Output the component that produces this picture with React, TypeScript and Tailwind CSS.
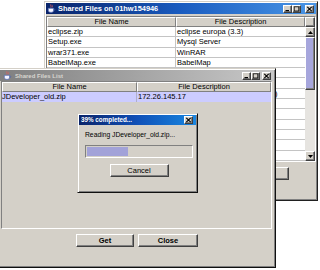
import React from "react";

const raised =
  "border border-t-white border-l-white border-r-[#404040] border-b-[#404040] shadow-[inset_-1px_-1px_0_#808080]";

function JavaIcon() {
  return (
    <svg width="9" height="9" viewBox="0 0 9 9" className="shrink-0">
      <path d="M3.8 0.4 C2.9 1.4 4.7 2 3.8 3.6" stroke="#e06060" strokeWidth="0.8" fill="none" />
      <path d="M5.4 0.9 C4.7 1.7 5.9 2.3 5.2 3.4" stroke="#e06060" strokeWidth="0.7" fill="none" />
      <path d="M1.3 4.3 H6.6 V6.4 C6.6 7.7 5.6 8.4 4 8.4 C2.4 8.4 1.3 7.7 1.3 6.4 Z" fill="#f4f4ff" stroke="#4a64b0" strokeWidth="0.7" />
      <path d="M6.6 4.8 C8.3 4.8 8.3 6.6 6.5 6.8" stroke="#4a64b0" strokeWidth="0.6" fill="none" />
    </svg>
  );
}

function TBtn({ kind }: { kind: "min" | "max" | "close" }) {
  return (
    <div className={`w-[9px] h-[8px] bg-[#d4d0c8] ${raised} flex items-center justify-center`}>
      <svg width="7" height="6" viewBox="0 0 7 6">
        {kind === "min" && <rect x="1.5" y="4" width="3.5" height="1.2" fill="#000" />}
        {kind === "max" && (
          <rect x="1.2" y="0.8" width="4.6" height="4.2" fill="none" stroke="#000" strokeWidth="0.8" />
        )}
        {kind === "close" && (
          <path d="M1.3 0.8 L5.7 5.2 M5.7 0.8 L1.3 5.2" stroke="#000" strokeWidth="1.1" />
        )}
      </svg>
    </div>
  );
}

function TitleButtons({ gapClose }: { gapClose: string }) {
  return (
    <div className="ml-auto flex items-center">
      <TBtn kind="min" />
      <TBtn kind="max" />
      <div className={gapClose} />
      <TBtn kind="close" />
    </div>
  );
}

function HeaderCell({ w, children }: { w: string; children: React.ReactNode }) {
  return (
    <div
      className={`${w} h-full bg-[#d4d0c8] border-t border-l border-t-white border-l-white border-r border-b border-r-[#808080] border-b-[#808080] flex items-center justify-center text-[7.5px] leading-none text-black whitespace-nowrap overflow-hidden`}
    >
      {children}
    </div>
  );
}

function Arrow({ up }: { up: boolean }) {
  return (
    <div className={`h-[10px] bg-[#d4d0c8] ${raised} flex items-center justify-center`}>
      <svg width="5" height="3" viewBox="0 0 5 3">
        {up ? <path d="M0 3 L2.5 0 L5 3 Z" fill="#000" /> : <path d="M0 0 L2.5 3 L5 0 Z" fill="#000" />}
      </svg>
    </div>
  );
}

const backRows: [string, string][] = [
  ["eclipse.zip", "eclipse europa (3.3)"],
  ["Setup.exe", "Mysql Server"],
  ["wrar371.exe", "WinRAR"],
  ["BabelMap.exe", "BabelMap"],
  ["", ""],
  ["", ""],
  ["", "Oracle JDeveloper (10.1.3.41)"],
  ["", ""],
  ["", ""],
  ["", ""],
  ["", ""],
  ["", ""],
  ["", ""],
];

function ClassicButton({ w, bold, children }: { w: string; bold?: boolean; children?: React.ReactNode }) {
  return (
    <div
      className={`${w} h-[13px] bg-[#d4d0c8] ${raised} flex items-center justify-center text-[7.5px] leading-none text-black ${
        bold ? "font-bold" : ""
      }`}
    >
      {children}
    </div>
  );
}

export default function App() {
  return (
    <div className="relative w-[320px] h-[270px] bg-white overflow-hidden font-['Liberation_Sans',Arial,sans-serif]">
      {/* Back window */}
      <div className="absolute left-[44px] top-[1px] w-[274px] h-[200px] bg-[#d4d0c8] border border-t-[#d4d0c8] border-l-[#d4d0c8] border-r-[#202020] border-b-[#202020] shadow-[inset_1px_1px_0_#ffffff,inset_-1px_-1px_0_#808080] p-[1px] flex flex-col">
        <div className="h-[11px] shrink-0 flex items-center bg-linear-to-r from-[#0a246a] via-[#1a5cc0] to-[#4a96e6] pl-[1px] pr-[2px] gap-[2px]">
          <JavaIcon />
          <span className="text-white font-bold text-[7.4px] leading-none whitespace-nowrap">
            Shared Files on 01hw154946
          </span>
          <TitleButtons gapClose="w-[4px]" />
        </div>
        <div className="mt-[2px] h-[146px] shrink-0 border border-t-[#808080] border-l-[#808080] border-r-white border-b-white flex">
          <div className="w-[258px] flex flex-col bg-white overflow-hidden">
            <div className="h-[10px] shrink-0 flex">
              <HeaderCell w="w-[129px]">File Name</HeaderCell>
              <HeaderCell w="w-[129px]">File Description</HeaderCell>
            </div>
            {backRows.map(([a, b], i) => (
              <div key={i} className="h-[10.3px] shrink-0 flex border-b border-[#c4c4c4] text-[7.5px] leading-[9px] text-black">
                <div className="w-[129px] border-r border-[#c4c4c4] pl-[1px] whitespace-nowrap overflow-hidden">{a}</div>
                <div className="w-[129px] pl-[1px] whitespace-nowrap overflow-hidden">{b}</div>
              </div>
            ))}
          </div>
          <div className="w-[10px] flex flex-col">
            <div className={`h-[10px] bg-[#d4d0c8] ${raised}`} />
            <Arrow up />
            <div className={`h-[53px] bg-[#a6a6dc] ${raised}`} />
            <div className="flex-1 bg-[#e6e4e0]" />
            <Arrow up={false} />
          </div>
        </div>
        <div className="flex-1 flex justify-end items-start pt-[5px] pr-[27px] gap-[4px]">
          <ClassicButton w="w-[58px]" />
        </div>
      </div>

      {/* Front window */}
      <div className="absolute left-[-2px] top-[68px] w-[278px] h-[200px] bg-[#d4d0c8] border border-t-[#d4d0c8] border-l-[#d4d0c8] border-r-[#101010] border-b-[#101010] shadow-[inset_1px_1px_0_#ffffff,inset_-1px_-1px_0_#808080] p-[1px] flex flex-col">
        <div className="h-[11px] shrink-0 flex items-center bg-linear-to-r from-[#808080] via-[#a4a4a4] to-[#c8c8c8] pl-[3px] pr-[3px] gap-[3px]">
          <JavaIcon />
          <span className="text-[#d8d6d0] font-bold text-[6px] leading-none whitespace-nowrap">Shared Files List</span>
          <TitleButtons gapClose="w-[2px]" />
        </div>
        <div className="ml-[1px] mr-[2px] h-[148px] shrink-0 border border-t-[#808080] border-l-[#808080] border-r-white border-b-white flex flex-col bg-[#d4d0c8]">
          <div className="h-[10px] shrink-0 flex">
            <HeaderCell w="w-[135px]">File Name</HeaderCell>
            <HeaderCell w="flex-1">File Description</HeaderCell>
          </div>
          <div className="h-[10px] shrink-0 flex bg-[#ccccff] text-[7.5px] leading-[10px] text-black">
            <div className="w-[135px] border-r border-[#b0b0c8] whitespace-nowrap overflow-hidden">JDeveloper_old.zip</div>
            <div className="flex-1 pl-[1px] whitespace-nowrap overflow-hidden">172.26.145.17</div>
          </div>
        </div>
        <div className="flex-1 flex justify-center items-start pt-[5px] gap-[4px]">
          <ClassicButton w="w-[58px]" bold>
            Get
          </ClassicButton>
          <ClassicButton w="w-[60px]" bold>
            Close
          </ClassicButton>
        </div>
      </div>

      {/* Progress dialog */}
      <div className="absolute left-[77px] top-[113px] w-[121px] h-[80px] bg-[#d4d0c8] border border-t-[#d4d0c8] border-l-[#d4d0c8] border-r-[#101010] border-b-[#101010] shadow-[inset_1px_1px_0_#ffffff,inset_-1px_-1px_0_#808080] p-[1px] flex flex-col">
        <div className="h-[10px] shrink-0 flex items-center bg-linear-to-r from-[#0a246a] via-[#1050b8] to-[#1a86e0] pl-[2px] pr-[3px]">
          <span className="text-white font-bold text-[6.3px] leading-none whitespace-nowrap">39% completed...</span>
          <div className="ml-auto">
            <TBtn kind="close" />
          </div>
        </div>
        <div className="flex-1 flex flex-col pl-[6px] pr-[3px] pt-[6px]">
          <div className="h-[8px] text-[6.75px] leading-[8px] text-black whitespace-nowrap">Reading JDeveloper_old.zip...</div>
          <div className="mt-[6px] w-[108px] h-[13px] border border-t-[#808080] border-l-[#808080] border-r-white border-b-white bg-[#d4d0c8] p-[1px] flex">
            <div className="w-[41px] h-full bg-[#a2a2d8]" />
          </div>
          <div className="mt-[6px] self-center">
            <ClassicButton w="w-[59px]">Cancel</ClassicButton>
          </div>
        </div>
      </div>
    </div>
  );
}
